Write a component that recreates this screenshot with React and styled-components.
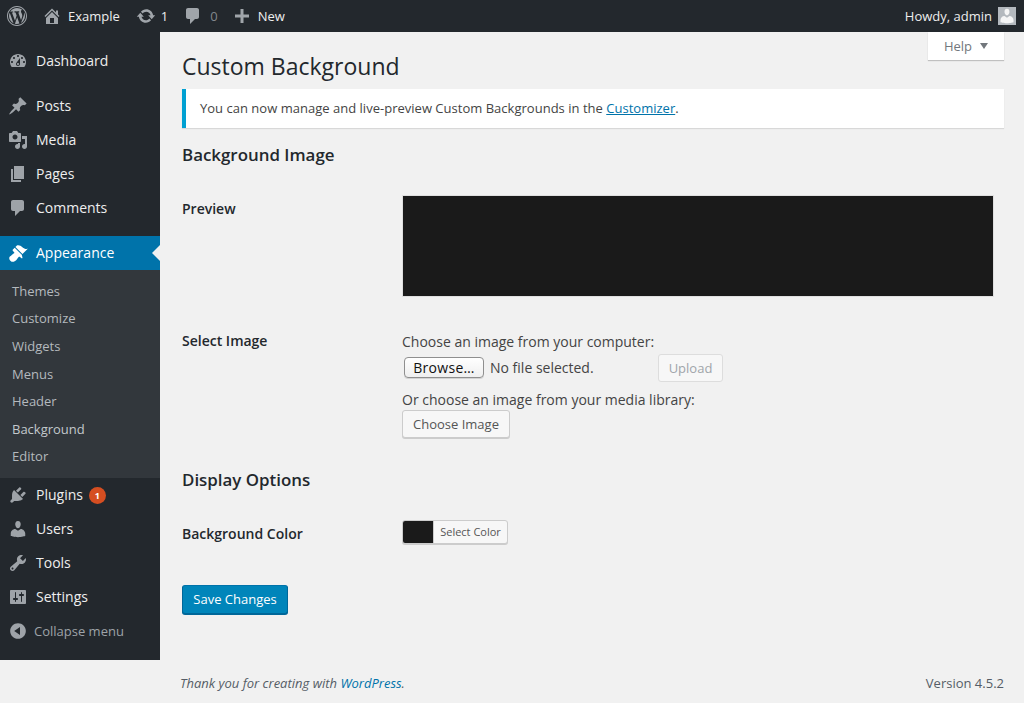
import React from 'react';
import styled, { createGlobalStyle } from 'styled-components';

const GlobalStyle = createGlobalStyle`
  html, body {
    margin: 0;
    padding: 0;
    background: #f1f1f1;
    font-family: "Open Sans", sans-serif;
    font-size: 13px;
    color: #444;
    -webkit-font-smoothing: subpixel-antialiased;
  }
  * { box-sizing: border-box; }
`;

const paths = {
  wordpress: 'M20 10c0-5.52-4.48-10-10-10S0 4.48 0 10s4.48 10 10 10 10-4.48 10-10zM10 1.01c4.96 0 8.99 4.03 8.99 8.99s-4.03 8.99-8.99 8.99S1.01 14.96 1.01 10 5.04 1.01 10 1.01zM8.01 14.82L4.96 6.61c.49-.03 1.05-.08 1.05-.08.43-.05.38-1.01-.06-.99 0 0-1.29.1-2.13.1-.15 0-.33 0-.52-.01 1.44-2.17 3.9-3.6 6.7-3.6 2.09 0 3.99.79 5.41 2.09-.6-.08-1.45.35-1.45 1.42 0 .66.38 1.22.79 1.88.31.54.5 1.22.5 2.21 0 1.34-1.27 4.48-1.27 4.48l-2.71-7.5c.48-.03.75-.16.75-.16.43-.05.38-1.1-.05-1.08 0 0-1.3.11-2.14.11-.78 0-2.11-.11-2.11-.11-.43-.02-.48 1.06-.05 1.08l.84.08 1.12 3.04zm6.02 2.15L16.64 10s.67-1.69.39-3.81c.63 1.14.94 2.42.94 3.81 0 2.96-1.56 5.58-3.94 6.97zM2.68 6.77L6.5 17.25c-2.67-1.3-4.47-4.08-4.47-7.25 0-1.16.2-2.23.65-3.23zm7.45 4.53l2.29 6.25c-.75.27-1.57.42-2.42.42-.72 0-1.41-.11-2.06-.3z',
  home: 'M16 8.5l1.53 1.53-1.06 1.06L10 4.62l-6.47 6.47-1.06-1.06L10 2.5l4 4v-2h2v4zm-6-2.46l6 5.99V18H4v-5.97zM12 17v-5H8v5h4z',
  update: 'M10.2 3.28c3.53 0 6.43 2.61 6.92 6h2.08l-3.5 4-3.5-4h2.32c-.45-1.97-2.21-3.45-4.32-3.45-1.45 0-2.73.71-3.54 1.78L4.95 5.66C6.23 4.2 8.11 3.28 10.2 3.28zm-.4 13.44c-3.52 0-6.43-2.61-6.92-6H.8l3.5-4c1.17 1.33 2.33 2.67 3.5 4H5.48c.45 1.97 2.21 3.45 4.32 3.45 1.45 0 2.73-.71 3.54-1.78l1.71 1.95c-1.28 1.46-3.15 2.38-5.25 2.38z',
  comment: 'M5 2h9c1.1 0 2 .9 2 2v7c0 1.1-.9 2-2 2h-2l-5 5v-5H5c-1.1 0-2-.9-2-2V4c0-1.1.9-2 2-2z',
  plus: 'M17 8.5v3h-5.5V17h-3v-5.5H3v-3h5.5V3h3v5.5z',
  dashboard: 'M3.76 16h12.48c1.1-1.37 1.76-3.11 1.76-5 0-4.42-3.58-8-8-8s-8 3.58-8 8c0 1.89.66 3.63 1.76 5zM10 4c.55 0 1 .45 1 1s-.45 1-1 1-1-.45-1-1 .45-1 1-1zM6 6c.55 0 1 .45 1 1s-.45 1-1 1-1-.45-1-1 .45-1 1-1zm8 0c.55 0 1 .45 1 1s-.45 1-1 1-1-.45-1-1 .45-1 1-1zm-5.37 5.55L12 7v6c0 1.1-.9 2-2 2s-2-.9-2-2c0-.57.24-1.08.63-1.45zM4 10c.55 0 1 .45 1 1s-.45 1-1 1-1-.45-1-1 .45-1 1-1zm12 0c.55 0 1 .45 1 1s-.45 1-1 1-1-.45-1-1 .45-1 1-1zm-5 3c0-.55-.45-1-1-1s-1 .45-1 1 .45 1 1 1 1-.45 1-1z',
  post: 'M10.44 3.02l1.82-1.82 6.36 6.35-1.83 1.82c-1.05-.68-2.48-.57-3.41.36l-.75.75c-.92.93-1.04 2.35-.35 3.41l-1.83 1.82-2.41-2.41-2.8 2.79c-.42.42-3.38 2.71-3.8 2.29s1.86-3.39 2.28-3.81l2.79-2.79L4.1 9.36l1.83-1.82c1.05.69 2.48.57 3.4-.36l.75-.75c.93-.92 1.05-2.35.36-3.41z',
  media: 'M13 11V4c0-.55-.45-1-1-1h-1.67L9 1H5L3.67 3H2c-.55 0-1 .45-1 1v7c0 .55.45 1 1 1h10c.55 0 1-.45 1-1zM7 4.5c1.38 0 2.5 1.12 2.5 2.5S8.38 9.5 7 9.5 4.5 8.38 4.5 7 5.62 4.5 7 4.5zM14 6h5v10.5c0 1.38-1.12 2.5-2.5 2.5S14 17.88 14 16.5s1.12-2.5 2.5-2.5c.17 0 .34.02.5.05V9h-3V6zm-4 8.05V13h2v3.5c0 1.38-1.12 2.5-2.5 2.5S7 17.88 7 16.5 8.12 14 9.5 14c.17 0 .34.02.5.05z',
  page: 'M6 15V2h10v13H6zm-1 1h8v2H3V5h2v11z',
  appearance: 'M14.48 11.06L7.41 3.99l1.5-1.5c.5-.56 2.3-.47 3.51.32 1.21.8 1.43 1.28 2.91 2.1 1.18.64 2.45 1.26 4.45.85zm-.71.71L6.7 4.7 4.93 6.47c-.39.39-.39 1.02 0 1.41l1.06 1.06c.39.39.39 1.03 0 1.42-.6.6-1.43 1.11-2.21 1.69-.35.26-.7.53-1.01.84C1.43 13.23.28 15.57 2.35 17.65s4.43.94 5.78-.41c.31-.31.59-.66.84-1.01.58-.78 1.09-1.61 1.69-2.21.39-.39 1.02-.39 1.41 0l1.06 1.06c.39.39 1.02.39 1.41 0z',
  plugins: 'M13.11 4.36L9.87 7.6 8 5.73l3.24-3.24c.35-.34 1.05-.2 1.56.32.52.51.66 1.21.31 1.55zm-8 1.77l.91-1.12 9.01 9.01-1.19.84c-.71.71-2.63 1.16-3.82 1.16H6.14L4.9 17.26c-.59.59-1.54.59-2.12 0-.59-.58-.59-1.53 0-2.12l1.24-1.24v-3.88c0-1.13.4-3.19 1.09-3.89zm7.26 3.97l3.24-3.24c.34-.35 1.04-.21 1.55.31.52.51.66 1.21.31 1.55l-3.24 3.25z',
  users: 'M10 9.25c-2.27 0-2.73-3.44-2.73-3.44C7 4.02 7.82 2 9.97 2c2.16 0 2.98 2.02 2.71 3.81 0 0-.41 3.44-2.68 3.44zm0 2.57L12.72 10c2.39 0 4.52 2.33 4.52 4.53v2.49s-3.65 1.13-7.24 1.13c-3.65 0-7.24-1.13-7.24-1.13v-2.49c0-2.25 1.94-4.48 4.47-4.48z',
  tools: 'M16.68 9.77c-1.34 1.34-3.3 1.67-4.95.99l-5.41 6.52c-.99.99-2.59.99-3.58 0s-.99-2.59 0-3.57l6.52-5.42c-.68-1.65-.35-3.61.99-4.95 1.28-1.28 3.12-1.62 4.72-1.06l-2.89 2.89 2.82 2.82 2.86-2.87c.53 1.58.18 3.39-1.08 4.65zM3.81 16.21c.4.39 1.04.39 1.43 0 .4-.4.4-1.04 0-1.43-.39-.4-1.03-.4-1.43 0-.39.39-.39 1.03 0 1.43z',
  settings: 'M18 16V4c0-.55-.45-1-1-1H3c-.55 0-1 .45-1 1v12c0 .55.45 1 1 1h14c.55 0 1-.45 1-1zM8 11h1c.55 0 1 .45 1 1s-.45 1-1 1H8v1.5c0 .28-.22.5-.5.5s-.5-.22-.5-.5V13H6c-.55 0-1-.45-1-1s.45-1 1-1h1V5.5c0-.28.22-.5.5-.5s.5.22.5.5V11zm5-2h-1c-.55 0-1-.45-1-1s.45-1 1-1h1V5.5c0-.28.22-.5.5-.5s.5.22.5.5V7h1c.55 0 1 .45 1 1s-.45 1-1 1h-1v5.5c0 .28-.22.5-.5.5s-.5-.22-.5-.5V9z',
  collapse: 'M10 2.16c4.33 0 7.84 3.51 7.84 7.84s-3.51 7.84-7.84 7.84S2.16 14.33 2.16 10 5.71 2.16 10 2.16zm2 11.72V6.12L6.18 9.97z',
};

const Dashicon = ({ name, size = 20, className }) => (
  <svg className={className} width={size} height={size} viewBox="0 0 20 20" fill="currentColor" fillRule="evenodd">
    <path d={paths[name]} />
  </svg>
);

const AdminBar = styled.header`
  height: 32px;
  background: #23282d;
  color: #eee;
  display: flex;
  align-items: center;
  justify-content: space-between;
  font-size: 13px;
`;

const BarGroup = styled.div`
  display: flex;
  align-items: center;
  height: 100%;
`;

const BarItem = styled.div`
  display: flex;
  align-items: center;
  gap: ${(p) => p.$gap ?? 6}px;
  padding: 0 ${(p) => p.$pad ?? 7}px 0 ${(p) => p.$padLeft ?? p.$pad ?? 7}px;
  height: 100%;
  color: ${(p) => (p.$dim ? '#82878c' : '#eee')};
  svg { color: #a0a5aa; flex: none; }
`;

const Avatar = styled.span`
  width: 18px;
  height: 18px;
  background: #b4b9be;
  display: flex;
  align-items: flex-end;
  justify-content: center;
  overflow: hidden;
  svg { color: #f5f5f5; }
`;

const Shell = styled.div`
  display: flex;
  align-items: flex-start;
`;

const Sidebar = styled.nav`
  width: 160px;
  flex: none;
  height: 628px;
  background: #23282d;
  padding-top: 12px;
`;

const MenuItem = styled.div`
  position: relative;
  height: 34px;
  display: flex;
  align-items: center;
  gap: 8px;
  padding-left: 8px;
  margin-top: ${(p) => p.$top ?? 0}px;
  font-size: 14px;
  color: ${(p) => (p.$active ? '#fff' : '#eee')};
  background: ${(p) => (p.$active ? '#0073aa' : 'transparent')};
  svg { color: ${(p) => (p.$active ? '#fff' : '#9ea3a8')}; flex: none; }
  ${(p) =>
    p.$active &&
    `&::after {
      content: '';
      position: absolute;
      right: 0;
      top: 50%;
      margin-top: -8px;
      border: 8px solid transparent;
      border-right-color: #f1f1f1;
      border-left-width: 0;
    }`}
`;

const MenuLabel = styled.span`
  padding-bottom: 2px;
`;

const SubMenu = styled.div`
  background: #32373c;
  padding: 7px 0 8px;
`;

const SubItem = styled.div`
  height: 27.6px;
  display: flex;
  align-items: center;
  padding-left: 12px;
  font-size: 13px;
  color: ${(p) => (p.$current ? '#c3c8cc' : '#b4b9be')};
`;

const Badge = styled.span`
  width: 17px;
  height: 17px;
  border-radius: 50%;
  background: #d54e21;
  color: #fff;
  font-size: 9px;
  font-weight: 700;
  display: flex;
  align-items: center;
  justify-content: center;
  margin-left: -2px;
`;

const Collapse = styled.div`
  height: 34px;
  display: flex;
  align-items: center;
  gap: 6px;
  padding-left: 8px;
  font-size: 13px;
  color: #9ea3a8;
`;

const Main = styled.main`
  flex: 1;
  min-width: 0;
  padding: 0 20px 0 22px;
`;

const HelpTab = styled.div`
  float: right;
  width: 76px;
  height: 28px;
  background: #fff;
  box-shadow: 0 1px 1px rgba(0, 0, 0, 0.2);
  display: flex;
  align-items: center;
  justify-content: center;
  gap: 8px;
  color: #72777c;
  font-size: 13px;
  &::after {
    content: '';
    border: 4.5px solid transparent;
    border-top: 6px solid #72777c;
    border-bottom-width: 0;
  }
`;

const Title = styled.h1`
  margin: 0;
  padding-top: 17px;
  font-size: 23px;
  line-height: 35px;
  font-weight: 400;
  color: #23282d;
`;

const Notice = styled.div`
  height: 39px;
  margin-top: 5px;
  background: #fff;
  border-left: 4px solid #00a0d2;
  box-shadow: 0 1px 1px rgba(0, 0, 0, 0.1);
  padding: 0 0 2px 14px;
  display: flex;
  align-items: center;
  font-size: 13px;
  letter-spacing: 0.015px;
  color: #444;
  white-space: pre;
`;

const TextLink = styled.a`
  color: #0073aa;
  text-decoration: ${(p) => (p.$plain ? 'none' : 'underline')};
`;

const SectionTitle = styled.h2`
  margin: ${(p) => p.$top}px 0 0;
  font-size: 16.9px;
  line-height: 24px;
  font-weight: 600;
  color: #23282d;
`;

const FormRow = styled.div`
  display: grid;
  grid-template-columns: 220px 592px;
  margin-top: ${(p) => p.$top}px;
`;

const RowLabel = styled.div`
  font-size: 14px;
  font-weight: 600;
  line-height: 20px;
  color: #23282d;
  padding-top: ${(p) => p.$top ?? 0}px;
`;

const Preview = styled.div`
  height: 102px;
  background: #1a1a1a;
  border: 1px solid #dfdfdf;
`;

const Hint = styled.div`
  font-size: 14px;
  line-height: 20px;
  color: #444;
  padding-top: ${(p) => p.$top ?? 0}px;
`;

const UploadRow = styled.div`
  display: flex;
  align-items: center;
  height: 28px;
  margin: 2px 0 8px;
`;

const FileButton = styled.span`
  width: 80px;
  height: 21px;
  margin: 0 0 1px 2px;
  padding-bottom: 1px;
  border: 1px solid #8f8f8f;
  border-radius: 4px;
  background: linear-gradient(#fff, #efefef);
  color: #111;
  font-size: 14px;
  letter-spacing: 0.3px;
  display: flex;
  align-items: center;
  justify-content: center;
  box-shadow: 0 1px 0 rgba(0, 0, 0, 0.12);
`;

const FileName = styled.span`
  width: 174px;
  padding: 0 0 2px 6px;
  font-size: 14px;
  color: #444;
`;

const Button = styled.button`
  display: block;
  font-family: inherit;
  font-size: 13px;
  height: 28px;
  width: ${(p) => p.$w}px;
  padding: 0;
  border: 1px solid #ccc;
  border-radius: 3px;
  background: #f7f7f7;
  color: #555;
  box-shadow: 0 1px 0 #ccc;
  ${(p) =>
    p.disabled &&
    `color: #a0a5aa; border-color: #ddd; background: #f7f7f7; box-shadow: none;`}
`;

const ColorButton = styled.div`
  display: flex;
  width: 106px;
  height: 24px;
  border: 1px solid #ccc;
  border-radius: 3px;
  background: #f7f7f7;
  box-shadow: 0 1px 0 #ccc;
  overflow: hidden;
`;

const Swatch = styled.span`
  width: 30px;
  background: #1a1a1a;
`;

const ColorLabel = styled.span`
  flex: 1;
  display: flex;
  align-items: center;
  justify-content: center;
  padding-bottom: 2px;
  font-size: 11px;
  color: #555;
  border-left: 1px solid #ccc;
`;

const SaveButton = styled.button`
  display: block;
  margin-top: 41px;
  width: 106px;
  height: 29px;
  padding: 0 0 2px;
  font-family: inherit;
  font-size: 13px;
  color: #fff;
  background: #0085ba;
  border: 1px solid;
  border-color: #0073aa #006799 #006799;
  border-radius: 3px;
  box-shadow: 0 1px 0 #006799;
`;

const Footer = styled.footer`
  display: flex;
  justify-content: space-between;
  align-items: center;
  margin: 60px 0 0 -2px;
  height: 18px;
  font-size: 13px;
  color: #555d66;
`;

const Thanks = styled.span`
  font-style: italic;
`;

const mainMenu = [
  { icon: 'dashboard', label: 'Dashboard' },
  { icon: 'post', label: 'Posts', top: 11 },
  { icon: 'media', label: 'Media' },
  { icon: 'page', label: 'Pages' },
  { icon: 'comment', label: 'Comments' },
];

const subMenu = ['Themes', 'Customize', 'Widgets', 'Menus', 'Header', 'Background', 'Editor'];

const App = () => (
  <>
    <GlobalStyle />
    <AdminBar>
      <BarGroup>
        <BarItem $pad={7}><Dashicon name="wordpress" /></BarItem>
        <BarItem $pad={8} $gap={6}><Dashicon name="home" />Example</BarItem>
        <BarItem $padLeft={8} $pad={7} $gap={5}><Dashicon name="update" />1</BarItem>
        <BarItem $padLeft={8} $pad={7} $gap={7} $dim><Dashicon name="comment" />0</BarItem>
        <BarItem $pad={7} $gap={6}><Dashicon name="plus" />New</BarItem>
      </BarGroup>
      <BarGroup>
        <BarItem $pad={8} $gap={6}>
          Howdy, admin
          <Avatar><Dashicon name="users" size={18} /></Avatar>
        </BarItem>
      </BarGroup>
    </AdminBar>
    <Shell>
      <Sidebar>
        {mainMenu.map((item) => (
          <MenuItem key={item.label} $top={item.top}>
            <Dashicon name={item.icon} />
            <MenuLabel>{item.label}</MenuLabel>
          </MenuItem>
        ))}
        <MenuItem $active $top={11}>
          <Dashicon name="appearance" />
          <MenuLabel>Appearance</MenuLabel>
        </MenuItem>
        <SubMenu>
          {subMenu.map((label) => (
            <SubItem key={label} $current={label === 'Background'}>{label}</SubItem>
          ))}
        </SubMenu>
        <MenuItem><Dashicon name="plugins" /><MenuLabel>Plugins</MenuLabel><Badge>1</Badge></MenuItem>
        <MenuItem><Dashicon name="users" /><MenuLabel>Users</MenuLabel></MenuItem>
        <MenuItem><Dashicon name="tools" /><MenuLabel>Tools</MenuLabel></MenuItem>
        <MenuItem><Dashicon name="settings" /><MenuLabel>Settings</MenuLabel></MenuItem>
        <Collapse><Dashicon name="collapse" />Collapse menu</Collapse>
      </Sidebar>
      <Main>
        <HelpTab>Help</HelpTab>
        <Title>Custom Background</Title>
        <Notice>
          You can now manage and live-preview Custom Backgrounds in the <TextLink href="#">Customizer</TextLink>.
        </Notice>
        <SectionTitle $top={15}>Background Image</SectionTitle>
        <FormRow $top={28}>
          <RowLabel $top={4}>Preview</RowLabel>
          <Preview />
        </FormRow>
        <FormRow $top={34}>
          <RowLabel>Select Image</RowLabel>
          <div>
            <Hint $top={1}>Choose an image from your computer:</Hint>
            <UploadRow>
              <FileButton>Browse…</FileButton>
              <FileName>No file selected.</FileName>
              <Button disabled $w={65}>Upload</Button>
            </UploadRow>
            <Hint>Or choose an image from your media library:</Hint>
            <Button $w={108}>Choose Image</Button>
          </div>
        </FormRow>
        <SectionTitle $top={30}>Display Options</SectionTitle>
        <FormRow $top={28}>
          <RowLabel $top={4}>Background Color</RowLabel>
          <ColorButton>
            <Swatch />
            <ColorLabel>Select Color</ColorLabel>
          </ColorButton>
        </FormRow>
        <SaveButton>Save Changes</SaveButton>
        <Footer>
          <Thanks>Thank you for creating with <TextLink $plain href="#">WordPress</TextLink>.</Thanks>
          <span>Version 4.5.2</span>
        </Footer>
      </Main>
    </Shell>
  </>
);

export default App;
